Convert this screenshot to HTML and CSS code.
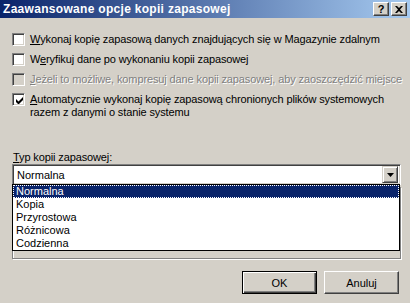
FILE: index.html
```html
<!DOCTYPE html>
<html lang="pl">
<head>
    <meta charset="UTF-8">
    <title>Zaawansowane opcje kopii zapasowej</title>
    <link rel="stylesheet" href="styles.css">
</head>
<body>
    <div class="dialog">
        <div class="titlebar">
            <span class="title">Zaawansowane opcje kopii zapasowej</span>
            <div class="caption-buttons">
                <span class="cap-btn help">?</span>
                <span class="cap-btn close">
                    <svg width="8" height="7" viewBox="0 0 8 7"><path d="M0 0h2l2 2 2-2h2L5 3.5 8 7H6L4 5 2 7H0l3-3.5z" fill="#000"/></svg>
                </span>
            </div>
        </div>

        <div class="content">
            <div class="options">
                <div class="option">
                    <span class="checkbox"></span>
                    <span class="label"><u>W</u>ykonaj kopię zapasową danych znajdujących się w Magazynie zdalnym</span>
                </div>
                <div class="option">
                    <span class="checkbox"></span>
                    <span class="label">W<u>e</u>ryfikuj dane po wykonaniu kopii zapasowej</span>
                </div>
                <div class="option disabled">
                    <span class="checkbox"></span>
                    <span class="label"><u>J</u>eżeli to możliwe, kompresuj dane kopii zapasowej, aby zaoszczędzić miejsce</span>
                </div>
                <div class="option">
                    <span class="checkbox checked">
                        <svg width="7" height="7" viewBox="0 0 7 7"><path d="M0 2v3l2 2h1l4-4V0L2.5 4.5z" fill="#000"/></svg>
                    </span>
                    <span class="label"><u>A</u>utomatycznie wykonaj kopię zapasową chronionych plików systemowych<br>razem z danymi o stanie systemu</span>
                </div>
            </div>

            <div class="type-label"><u>T</u>yp kopii zapasowej:</div>
            <div class="combo-wrap">
                <div class="combo">
                    <span class="combo-value">Normalna</span>
                    <span class="combo-btn">
                        <svg width="7" height="4" viewBox="0 0 7 4"><path d="M0 0h7L3.5 4z" fill="#000"/></svg>
                    </span>
                </div>
                <div class="frame"></div>
                <ul class="dropdown">
                    <li class="selected">Normalna</li>
                    <li>Kopia</li>
                    <li>Przyrostowa</li>
                    <li>Różnicowa</li>
                    <li>Codzienna</li>
                </ul>
            </div>

            <div class="buttons">
                <button class="btn default">OK</button>
                <button class="btn">Anuluj</button>
            </div>
        </div>
    </div>
</body>
</html>
```

FILE: styles.css
```css
body {
    margin: 0;
    background-color: #d4d0c8;
    font-family: "Liberation Sans", Arial, sans-serif;
    font-size: 11px;
    color: #000;
}
.dialog {
    width: 410px;
    height: 303px;
    background-color: #d4d0c8;
    overflow: hidden;
    display: flex;
    flex-direction: column;
}
.titlebar {
    height: 18px;
    flex: none;
    display: flex;
    align-items: center;
    justify-content: space-between;
    background: linear-gradient(to right, #0a246a, #a6caf0);
    padding: 0 3px 0 3px;
}
.title {
    color: #fff;
    font-weight: bold;
    font-size: 12px;
    letter-spacing: 0.3px;
}
.caption-buttons {
    display: flex;
    gap: 2px;
}
.cap-btn {
    width: 14px;
    height: 12px;
    background-color: #d4d0c8;
    border: 1px solid;
    border-color: #fff #404040 #404040 #fff;
    box-shadow: inset -1px -1px #808080;
    display: flex;
    align-items: center;
    justify-content: center;
    font-weight: bold;
    font-size: 11px;
    line-height: 12px;
}
.content {
    flex: 1;
    display: flex;
    flex-direction: column;
    padding: 15px 10px 9px 12px;
}
.options {
    display: flex;
    flex-direction: column;
}
.option {
    display: flex;
    align-items: flex-start;
    min-height: 20px;
}
.checkbox {
    width: 11px;
    height: 11px;
    flex: none;
    background-color: #fff;
    border: 1px solid;
    border-color: #808080 #fff #fff #808080;
    box-shadow: inset 1px 1px #404040, inset -1px -1px #d4d0c8;
    display: flex;
    align-items: center;
    justify-content: center;
    margin-right: 5px;
}
.checkbox svg {
    margin: 1px 0 0 1px;
}
.label {
    line-height: 13px;
    white-space: nowrap;
    letter-spacing: -0.12px;
}
.disabled .checkbox {
    background-color: #d4d0c8;
}
.disabled .label {
    color: #808080;
    text-shadow: 1px 1px #fff;
}
.type-label {
    margin-top: 32px;
    line-height: 13px;
    margin-left: 1px;
    letter-spacing: -0.12px;
}
.combo-wrap {
    position: relative;
    width: 389px;
}
.combo {
    height: 19px;
    background-color: #fff;
    border: 1px solid;
    border-color: #808080 #fff #fff #808080;
    box-shadow: inset 1px 1px #404040, inset -1px -1px #d4d0c8;
    display: flex;
    align-items: center;
    justify-content: space-between;
    padding: 0 2px 0 4px;
}
.combo-btn {
    width: 14px;
    height: 15px;
    background-color: #d4d0c8;
    border: 1px solid;
    border-color: #d4d0c8 #404040 #404040 #d4d0c8;
    box-shadow: inset 1px 1px #fff, inset -1px -1px #808080;
    display: flex;
    align-items: center;
    justify-content: center;
}
.frame {
    height: 70px;
    margin-top: 2px;
    border: 1px solid #808080;
    box-shadow: 1px 1px #fff, inset 1px 1px #fff;
}
.dropdown {
    position: absolute;
    top: 20px;
    left: 0;
    width: 386px;
    margin: 0;
    padding: 0;
    list-style: none;
    background-color: #fff;
    border: 1px solid #000;
}
.dropdown li {
    height: 13px;
    line-height: 13px;
    padding-left: 3px;
}
.dropdown li.selected {
    background-color: #0a246a;
    color: #fff;
    outline: 1px dotted #fff;
    outline-offset: -1px;
}
.buttons {
    display: flex;
    justify-content: flex-end;
    gap: 7px;
    margin-top: auto;
    padding-right: 1px;
}
.btn {
    width: 75px;
    height: 23px;
    font-family: "Liberation Sans", Arial, sans-serif;
    font-size: 11px;
    background-color: #d4d0c8;
    border: 1px solid;
    border-color: #fff #404040 #404040 #fff;
    box-shadow: inset -1px -1px #808080;
    padding: 0;
    color: #000;
}
.btn.default {
    border-color: #000;
    box-shadow: inset 1px 1px #fff, inset -1px -1px #404040, inset -2px -2px #808080;
}
```
